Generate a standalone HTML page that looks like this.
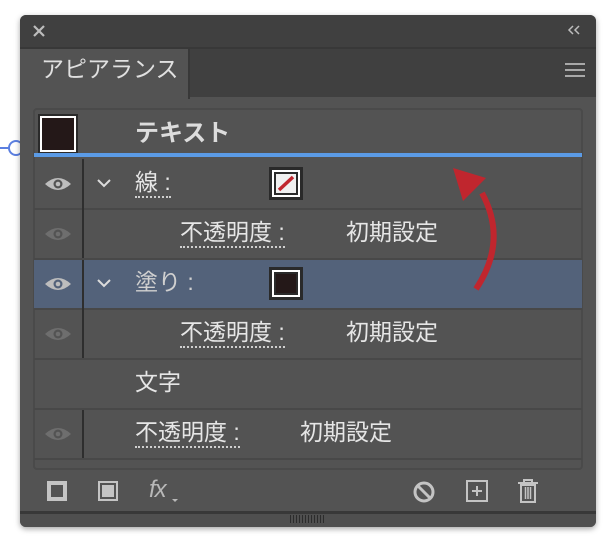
<!DOCTYPE html>
<html><head><meta charset="utf-8"><style>
*{margin:0;padding:0;box-sizing:border-box}
body{width:614px;height:555px;background:#fff;position:relative;overflow:hidden;font-family:"Liberation Sans","Noto Sans CJK JP",sans-serif}
.a{position:absolute}
.panel{left:20px;top:15px;width:576px;height:512px;background:#535353;border-radius:6px;box-shadow:0 2px 6px rgba(0,0,0,.35);overflow:hidden}
.t{color:#e6e6e6;font-size:23px;line-height:1}
.u{border-bottom:2px dotted #cfcfcf;padding-bottom:2px}
.sep{height:2px;background:#484848}
.vl{width:2px;background:#2e2e2e}
</style></head><body>
<div class="a" style="left:0;top:147px;width:12px;height:2px;background:#5b7fe0"></div>
<div class="a" style="left:8px;top:140px;width:16px;height:16px;border:2px solid #5b7fe0;border-radius:50%;background:#fff"></div>
<div class="a panel">
 <div class="a" style="left:0;top:0;width:576px;height:32px;background:#404040"></div>
 <div class="a" style="left:0;top:32px;width:576px;height:50px;background:#404040;border-top:2px solid #383838"></div>
 <div class="a" style="left:0;top:32px;width:170px;height:52px;background:#535353;border-top:2px solid #383838;border-right:2px solid #383838"></div>
 <svg class="a" style="left:12px;top:9px" width="14" height="14"><path d="M2 2L12 12M12 2L2 12" stroke="#bdbdbd" stroke-width="2.2"/></svg>
 <svg class="a" style="left:547px;top:10px" width="14" height="10"><path d="M6 1L2 5L6 9M12 1L8 5L12 9" stroke="#bdbdbd" stroke-width="1.5" fill="none"/></svg>
 <div class="a t" style="left:21px;top:43px;font-size:23px;color:#e0e0e0">アピアランス</div>
 <div class="a" style="left:545px;top:48px;width:20px;height:2px;background:#a8a8a8;box-shadow:0 6px 0 #a8a8a8,0 12px 0 #a8a8a8"></div>
 <div class="a" style="left:13px;top:93px;width:550px;height:362px;border:2px solid #4a4a4a;border-radius:4px"></div>
 <div class="a" style="left:20px;top:101px;width:36px;height:36px;background:#241818;border:2px solid #fff;outline:2px solid #2a2a2a"></div>
 <div class="a t" style="left:115px;top:107px;font-size:24px;font-weight:bold;color:#dcdcdc">テキスト</div>
 <div class="a" style="left:14px;top:138px;width:548px;height:4px;background:#5b9be6"></div>
 <div class="a" style="left:14px;top:245px;width:548px;height:48px;background:#53627a"></div>
 <div class="a sep" style="left:14px;top:193px;width:548px"></div>
 <div class="a sep" style="left:14px;top:243px;width:548px"></div>
 <div class="a sep" style="left:14px;top:293px;width:548px"></div>
 <div class="a sep" style="left:14px;top:343px;width:548px"></div>
 <div class="a sep" style="left:14px;top:393px;width:548px"></div>
 <div class="a sep" style="left:14px;top:443px;width:548px"></div>
 <div class="a vl" style="left:62px;top:144px;height:99px"></div>
 <div class="a vl" style="left:62px;top:245px;height:98px"></div>
 <div class="a vl" style="left:62px;top:395px;height:48px"></div>
 <svg class="a" style="left:24px;top:161px" width="28" height="16"><path d="M1 8Q14 -4 27 8Q14 20 1 8Z" fill="#bdbdbd"/><circle cx="14" cy="8" r="4.5" fill="#535353"/><circle cx="14" cy="8" r="2.3" fill="#bdbdbd"/></svg>
 <svg class="a" style="left:24px;top:211px" width="28" height="16"><path d="M1 8Q14 -4 27 8Q14 20 1 8Z" fill="#6e6e6e"/><circle cx="14" cy="8" r="4.5" fill="#535353"/><circle cx="14" cy="8" r="2.3" fill="#6e6e6e"/></svg>
 <svg class="a" style="left:24px;top:261px" width="28" height="16"><path d="M1 8Q14 -4 27 8Q14 20 1 8Z" fill="#bdbdbd"/><circle cx="14" cy="8" r="4.5" fill="#53627a"/><circle cx="14" cy="8" r="2.3" fill="#bdbdbd"/></svg>
 <svg class="a" style="left:24px;top:311px" width="28" height="16"><path d="M1 8Q14 -4 27 8Q14 20 1 8Z" fill="#6e6e6e"/><circle cx="14" cy="8" r="4.5" fill="#535353"/><circle cx="14" cy="8" r="2.3" fill="#6e6e6e"/></svg>
 <svg class="a" style="left:24px;top:411px" width="28" height="16"><path d="M1 8Q14 -4 27 8Q14 20 1 8Z" fill="#6e6e6e"/><circle cx="14" cy="8" r="4.5" fill="#535353"/><circle cx="14" cy="8" r="2.3" fill="#6e6e6e"/></svg>
 <svg class="a" style="left:77px;top:163px" width="14" height="10"><path d="M1 2L7 8L13 2" stroke="#dcdcdc" stroke-width="2" fill="none"/></svg>
 <svg class="a" style="left:77px;top:263px" width="14" height="10"><path d="M1 2L7 8L13 2" stroke="#dcdcdc" stroke-width="2" fill="none"/></svg>
 <div class="a t u" style="left:115px;top:156px">線 :</div>
 <div class="a" style="left:249px;top:152px;width:34px;height:33px;background:#fff;border:3px solid #2a2a2a"><div style="position:absolute;left:2px;top:2px;width:24px;height:23px;border:2px solid #2a2a2a;background:#f0f0f0"><svg width="20" height="19" style="position:absolute;left:0;top:0"><path d="M3 16L17 3" stroke="#c0262e" stroke-width="3.5"/></svg></div></div>
 <div class="a t u" style="left:160px;top:206px">不透明度 :</div>
 <div class="a t" style="left:326px;top:206px">初期設定</div>
 <div class="a t" style="left:115px;top:256px;color:#d0d0d0">塗り :</div>
 <div class="a" style="left:249px;top:252px;width:34px;height:33px;background:#fff;border:3px solid #2a2a2a"><div style="position:absolute;left:2px;top:2px;width:24px;height:23px;border:2px solid #2a2a2a;background:#241818"></div></div>
 <div class="a t u" style="left:160px;top:306px">不透明度 :</div>
 <div class="a t" style="left:326px;top:306px">初期設定</div>
 <div class="a t" style="left:115px;top:356px">文字</div>
 <div class="a t u" style="left:115px;top:406px">不透明度 :</div>
 <div class="a t" style="left:280px;top:406px">初期設定</div>
 <svg class="a" style="left:400px;top:141px" width="120" height="160"><path d="M56 133Q88 85 62 37" stroke="#c0262e" stroke-width="6" fill="none"/><path d="M33 12L66 22L43 45Z" fill="#c0262e"/></svg>
 <div class="a" style="left:27px;top:466px;width:20px;height:20px;border:4px solid #c4c4c4"></div>
 <div class="a" style="left:78px;top:466px;width:20px;height:20px;border:2px solid #c4c4c4;padding:2px"><div style="width:12px;height:12px;background:#c4c4c4"></div></div>
 <div class="a" style="left:129px;top:461px;color:#b8b8b8;font-size:24px;font-style:italic;font-family:'Liberation Sans',sans-serif;letter-spacing:-1px">fx</div>
 <div class="a" style="left:152px;top:484px;width:0;height:0;border-left:3px solid transparent;border-right:3px solid transparent;border-top:3px solid #b8b8b8"></div>
 <svg class="a" style="left:392px;top:465px" width="24" height="24"><circle cx="12" cy="12" r="9" stroke="#c4c4c4" stroke-width="3" fill="none"/><path d="M6 6L18 18" stroke="#c4c4c4" stroke-width="3"/></svg>
 <svg class="a" style="left:446px;top:465px" width="22" height="22"><rect x="1" y="1" width="20" height="20" stroke="#c4c4c4" stroke-width="2" fill="none"/><path d="M11 6V16M6 11H16" stroke="#c4c4c4" stroke-width="2"/></svg>
 <svg class="a" style="left:496px;top:463px" width="24" height="26"><path d="M2 5H22M8 5V2H16V5" stroke="#c4c4c4" stroke-width="2" fill="none"/><path d="M5 7H19V24H5Z" stroke="#c4c4c4" stroke-width="2" fill="none"/><path d="M9.5 9V21M12 9V21M14.5 9V21" stroke="#c4c4c4" stroke-width="1.5"/></svg>
 <div class="a" style="left:0;top:496px;width:576px;height:3px;background:#383838"></div>
 <div class="a" style="left:0;top:499px;width:576px;height:13px;background:#4f4f4f"></div>
 <div class="a" style="left:270px;top:500px;width:36px;height:8px;background:repeating-linear-gradient(90deg,#2c2c2c 0 1px,transparent 1px 3px)"></div>
</div>
</body></html>
